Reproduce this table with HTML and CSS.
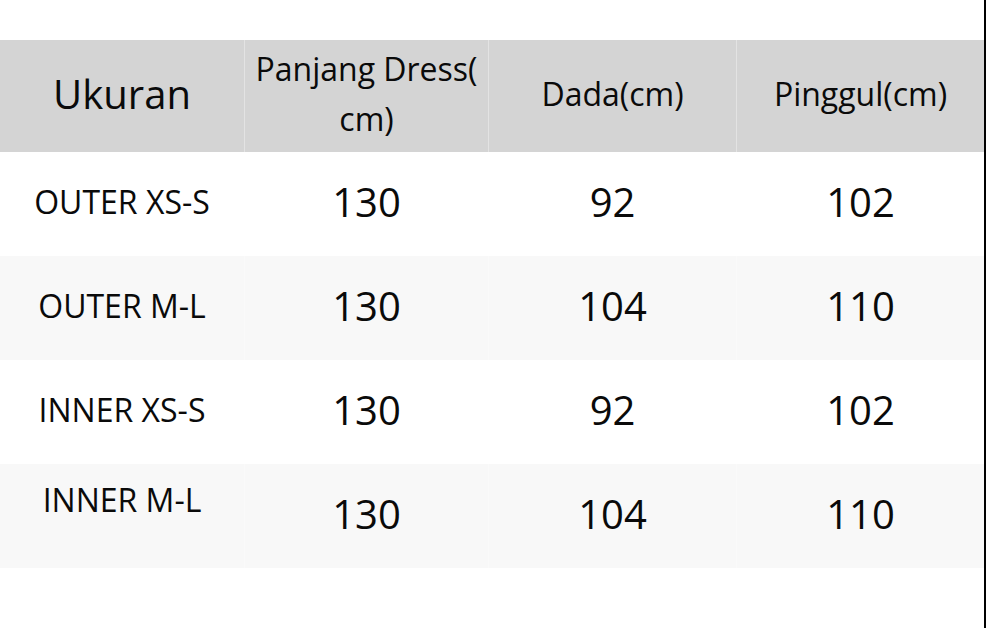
FILE: index.html
```html
<!DOCTYPE html>
<html>
<head>
<meta charset="utf-8">
<link rel="stylesheet" href="styles.css">
</head>
<body>
<div class="page">
  <div class="table">
    <div class="row head">
      <div class="cell title">Ukuran</div>
      <div class="cell hd">Panjang Dress(<br>cm)</div>
      <div class="cell hd">Dada(cm)</div>
      <div class="cell hd">Pinggul(cm)</div>
    </div>
    <div class="row">
      <div class="cell label">OUTER XS-S</div>
      <div class="cell num">130</div>
      <div class="cell num">92</div>
      <div class="cell num">102</div>
    </div>
    <div class="row alt">
      <div class="cell label">OUTER M-L</div>
      <div class="cell num">130</div>
      <div class="cell num">104</div>
      <div class="cell num">110</div>
    </div>
    <div class="row">
      <div class="cell label">INNER XS-S</div>
      <div class="cell num">130</div>
      <div class="cell num">92</div>
      <div class="cell num">102</div>
    </div>
    <div class="row alt">
      <div class="cell label raised">INNER M-L</div>
      <div class="cell num">130</div>
      <div class="cell num">104</div>
      <div class="cell num">110</div>
    </div>
  </div>
</div>
</body>
</html>
```

FILE: styles.css
```css
html, body {
  margin: 0;
  padding: 0;
  background: #ffffff;
}
body {
  font-family: "Open Sans", "Noto Sans", sans-serif;
  color: #0a0a0a;
}
.page {
  width: 986px;
  height: 628px;
  border-right: 2px solid #000000;
  padding-top: 40px;
  box-sizing: border-box;
}
.table {
  display: flex;
  flex-direction: column;
}
.row {
  display: grid;
  grid-template-columns: 244px 244px 248px 248px;
  height: 104px;
}
.row.head {
  height: 112px;
  background: #d4d4d4;
}
.row.alt {
  background: #f8f8f8;
}
.cell {
  display: flex;
  align-items: center;
  justify-content: center;
  text-align: center;
  padding-bottom: 5px;
  box-sizing: border-box;
}
.cell + .cell {
  border-left: 1px solid rgba(255, 255, 255, 0.35);
}
.title {
  font-size: 40px;
}
.hd {
  font-size: 32px;
  line-height: 50px;
}
.label {
  font-size: 32px;
}
.label.raised {
  padding-bottom: 33px;
}
.num {
  font-size: 40px;
}
```
